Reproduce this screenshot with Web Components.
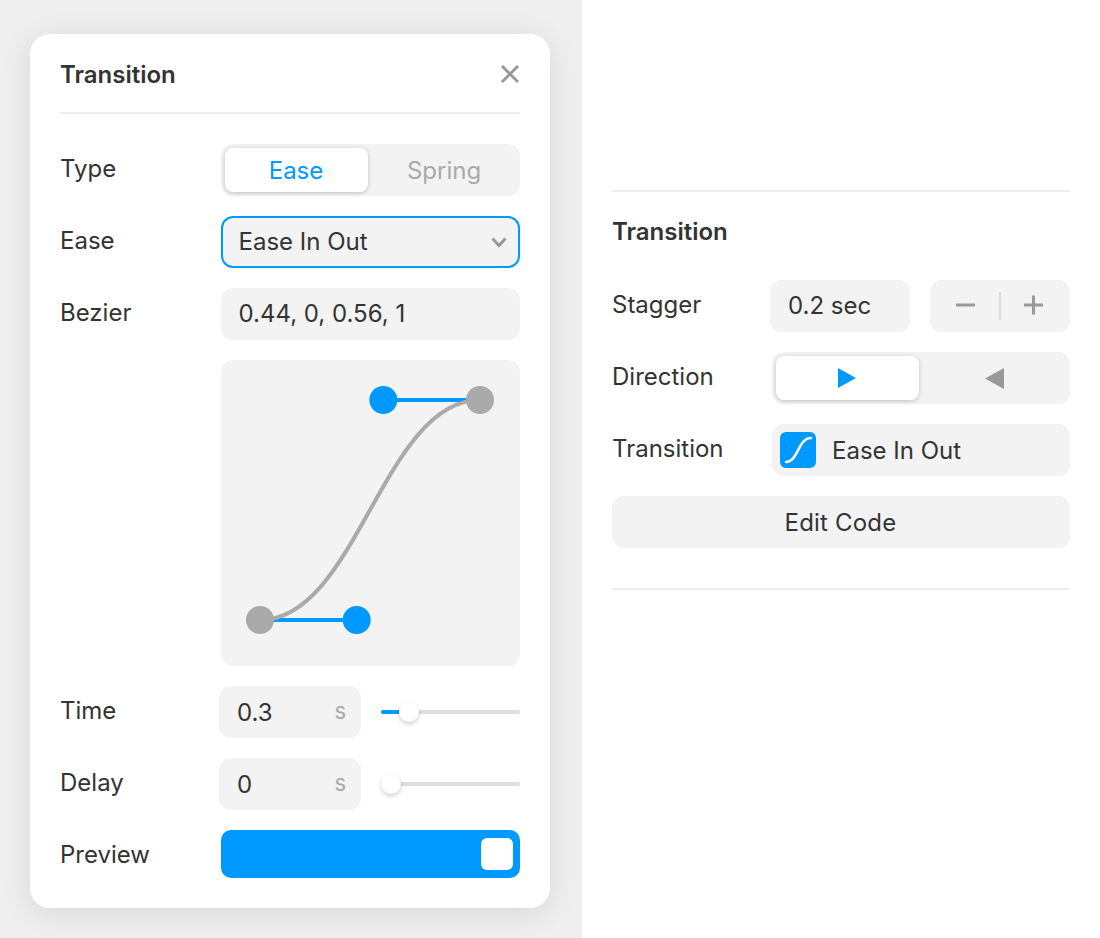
<!doctype html>
<html lang="en"><head><meta charset="utf-8"><title>Transition</title>
<style>
html,body{margin:0;height:100%;background:#fff}
body{font-family:Inter,"Liberation Sans",sans-serif;font-size:24px;color:#333}
</style></head><body>
<app-shell>
  <pop-card slot="left" heading="Transition">
    <field-row label="Type"><seg-control><span slot="a" style="color:#09f">Ease</span><span slot="b" style="color:#aaa">Spring</span></seg-control></field-row>
    <field-row label="Ease"><text-box focused>Ease In Out<svg slot="end" width="16" height="11" viewBox="0 0 16 11"><path d="M1.5 1.5 8 8.5l6.500-7" fill="none" stroke="#999" stroke-width="3"/></svg></text-box></field-row>
    <field-row label="Bezier"><text-box inset>0.44, 0, 0.56, 1</text-box></field-row>
    <field-row><bezier-graph></bezier-graph></field-row>
    <field-row label="Time" wide><num-slider value="0.3" knob="18"></num-slider></field-row>
    <field-row label="Delay" wide><num-slider value="0" knob="0"></num-slider></field-row>
    <field-row label="Preview"><preview-bar></preview-bar></field-row>
  </pop-card>
  <prop-section slot="right" heading="Transition">
    <prop-row label="Stagger"><div style="display:flex;gap:20px;margin-left:-2px"><text-box style="width:140px">0.2 sec</text-box><step-buttons></step-buttons></div></prop-row>
    <prop-row label="Direction"><seg-control>
      <svg slot="a" width="18" height="20" viewBox="0 0 18 20"><path d="M0 0 18 10 0 20Z" fill="#09f"/></svg>
      <svg slot="b" width="19" height="21" viewBox="0 0 19 21"><path d="M19 0 0 10.500 19 21Z" fill="#999"/></svg>
    </seg-control></prop-row>
    <prop-row label="Transition"><text-box tight><svg slot="start" width="36" height="36" viewBox="0 0 36 36"><rect width="36" height="36" rx="6" fill="#09f"/><path d="M6 30C18 30 18 6 31 6" fill="none" stroke="#fff" stroke-width="2.500" stroke-linecap="round"/></svg><span style="position:relative;top:1px">Ease In Out</span></text-box></prop-row>
    <text-box center><span style="position:relative;top:1px;letter-spacing:.2px">Edit Code</span></text-box>
  </prop-section>
</app-shell>
<script>
function def(name, css, html){
  customElements.define(name, class extends HTMLElement{
    connectedCallback(){
      if(this.shadowRoot) return;
      const r=this.attachShadow({mode:'open'});
      const h=typeof html==='function'?html(this):html;
      r.innerHTML='<style>'+css+'</style>'+h;
    }
  });
}
def('app-shell',`
:host{display:flex;height:938px;overflow:hidden}
.l{width:582px;box-sizing:border-box;background:#efefef;padding:34px 32px 30px 30px;flex:none}
.r{flex:1;box-sizing:border-box;padding:190px 30px 0}
`,`<div class="l"><slot name="left"></slot></div><div class="r"><slot name="right"></slot></div>`);
def('pop-card',`
:host{display:block;background:#fff;border-radius:20px;box-shadow:0 5px 30px rgba(0,0,0,.1);padding:0 30px 30px;width:520px;box-sizing:border-box}
header{display:flex;align-items:center;justify-content:space-between;border-bottom:2px solid #eee;margin-bottom:30px;box-sizing:border-box;height:80px;padding-top:2px}
h2{margin:0;font:600 24px/30px Inter,sans-serif;color:#333;position:relative;top:1px}
svg{display:block}
.b{display:flex;flex-direction:column;gap:20px}
`,h=>`<header><h2>${h.getAttribute('heading')}</h2><svg width="20" height="20" viewBox="0 0 20 20"><path d="M2 2 18 18M18 2 2 18" stroke="#999" stroke-width="3"/></svg></header><div class="b"><slot></slot></div>`);
def('field-row',`
:host{display:grid;grid-template-columns:161px 299px;align-items:start}
:host([wide]){grid-template-columns:159px 301px}
.lab{line-height:50px;height:48px;color:#333}
`,h=>`<div class="lab">${h.getAttribute('label')||''}</div><slot></slot>`);
def('seg-control',`
:host{display:grid;grid-template-columns:143px 1fr;background:#f3f3f3;border-radius:12px;height:52px;padding:4px 0 4px 4px;box-sizing:border-box;align-items:center;justify-items:center}
.on{background:#fff;border-radius:8px;height:44px;width:143px;box-sizing:border-box;padding-right:1px;display:flex;align-items:center;justify-content:center;box-shadow:0 1px 4px rgba(0,0,0,.22)}
.off{display:flex;align-items:center;justify-content:center;height:44px;width:100%}
`,`<div class="on"><slot name="a"></slot></div><div class="off"><slot name="b"></slot></div>`);
def('text-box',`
:host{display:flex;align-items:center;height:52px;box-sizing:border-box;background:#f3f3f3;border-radius:12px;padding:0 18px;color:#333;line-height:52px;gap:16px}
:host([inset]){padding-left:17.500px}
:host([focused]){border:2px solid #09f;padding:0 11px 0 15.500px;justify-content:space-between}
:host([tight]){padding:0 8px}
:host([center]){justify-content:center;padding-right:19px}
::slotted(svg){display:block;flex:none}
`,`<slot name="start"></slot><slot></slot><slot name="end"></slot>`);
def('bezier-graph',`
:host{display:block;height:306px;background:#f3f3f3;border-radius:12px}
svg{display:block}
`,`<svg width="299" height="306" viewBox="221 360 299 306">
<path d="M260 620H357M480 400H383" stroke="#09f" stroke-width="4" fill="none"/>
<path d="M260 620C356.800 620 383.200 400 480 400" stroke="#aaa" stroke-width="4" fill="none"/>
<circle cx="383.300" cy="400" r="14" fill="#09f"/><circle cx="356.700" cy="620" r="14" fill="#09f"/>
<circle cx="480" cy="400" r="14" fill="#aaa"/><circle cx="260" cy="620" r="14" fill="#aaa"/></svg>`);
def('num-slider',`
:host{display:grid;grid-template-columns:142px 1fr;gap:20px;align-items:center}
.f{height:52px;background:#f3f3f3;border-radius:12px;display:flex;align-items:center;justify-content:space-between;padding:0 14px 0 18px;box-sizing:border-box}
.u{color:#aaa;font-size:24px;transform:translateY(-2px) scaleX(.92)}
.t{position:relative;height:4px;border-radius:2px;background:#ddd}
.p{height:4px;border-radius:2px 0 0 2px;background:#09f}
.k{position:absolute;top:-8px;width:20px;height:20px;border-radius:50%;background:#fff;box-shadow:0 2px 4px rgba(0,0,0,.2)}
`,h=>{const k=+h.getAttribute('knob');return `<div class="f"><span>${h.getAttribute('value')}</span><span class="u">s</span></div><div class="t"><div class="p" style="width:${k}px"></div><div class="k" style="left:${k}px"></div></div>`});
def('preview-bar',`
:host{display:flex;justify-content:flex-end;align-items:center;height:48px;background:#09f;border-radius:10px;padding-right:7px;box-sizing:border-box}
i{display:block;width:32px;height:32px;background:#fff;border-radius:6px}
`,`<i></i>`);
def('prop-section',`
:host{display:block;border-top:2px solid #eee;border-bottom:2px solid #eee;height:400px;box-sizing:border-box}
h2{margin:0;font:600 24px/30px Inter,sans-serif;color:#333;padding:25px 0 33px}
.b{display:flex;flex-direction:column;gap:20px}
`,h=>`<h2>${h.getAttribute('heading')}</h2><div class="b"><slot></slot></div>`);
def('prop-row',`
:host{display:grid;grid-template-columns:160px 298px;align-items:start}
.lab{line-height:50px;height:48px;color:#333}
`,h=>`<div class="lab">${h.getAttribute('label')}</div><slot></slot>`);
def('step-buttons',`
:host{display:flex;width:140px;height:52px;background:#f3f3f3;border-radius:12px;align-items:center;justify-content:center}
svg{display:block}
`,`<svg width="140" height="52" viewBox="0 0 140 52"><path d="M26 25H45M94 25H113M103.500 15.500V34.500" stroke="#999" stroke-width="3" fill="none"/><path d="M70 12V40" stroke="#ddd" stroke-width="2"/></svg>`);
</script>
</body></html>
